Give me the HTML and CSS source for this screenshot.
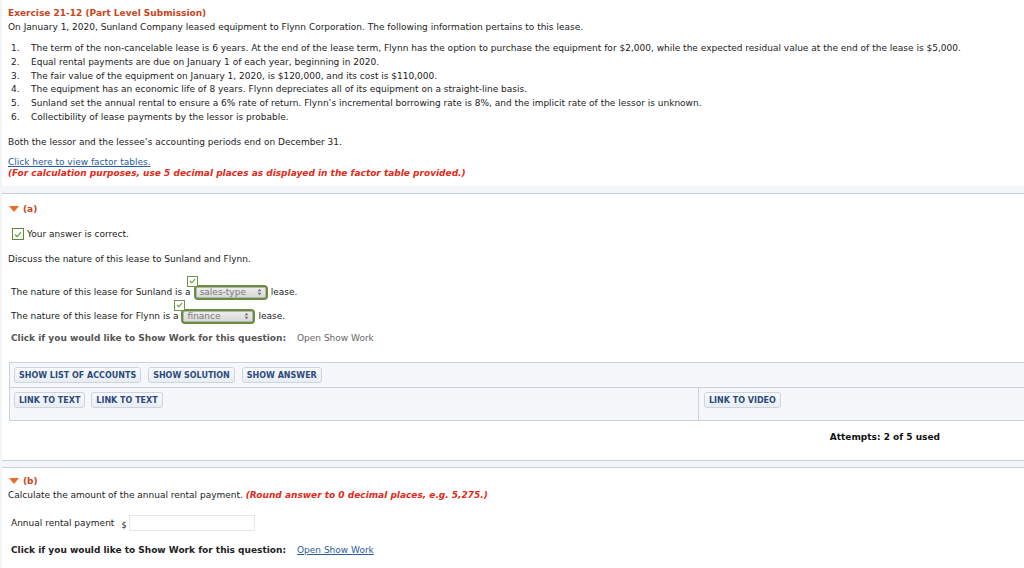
FILE: index.html
```html
<!DOCTYPE html>
<html lang="en">
<head>
    <meta charset="UTF-8">
    <meta name="viewport" content="width=device-width, initial-scale=1.0">
    <title>Exercise 21-12</title>
    <link rel="stylesheet" href="styles.css">
</head>
<body>
<div class="page">
    <div class="intro">
        <div class="title">Exercise 21-12 (Part Level Submission)</div>
        <p class="lead">On January 1, 2020, Sunland Company leased equipment to Flynn Corporation. The following information pertains to this lease.</p>
        <ol class="facts">
            <li><span class="num">1.</span>The term of the non-cancelable lease is 6 years. At the end of the lease term, Flynn has the option to purchase the equipment for $2,000, while the expected residual value at the end of the lease is $5,000.</li>
            <li><span class="num">2.</span>Equal rental payments are due on January 1 of each year, beginning in 2020.</li>
            <li><span class="num">3.</span>The fair value of the equipment on January 1, 2020, is $120,000, and its cost is $110,000.</li>
            <li><span class="num">4.</span>The equipment has an economic life of 8 years. Flynn depreciates all of its equipment on a straight-line basis.</li>
            <li><span class="num">5.</span>Sunland set the annual rental to ensure a 6% rate of return. Flynn’s incremental borrowing rate is 8%, and the implicit rate of the lessor is unknown.</li>
            <li><span class="num">6.</span>Collectibility of lease payments by the lessor is probable.</li>
        </ol>
        <p class="both">Both the lessor and the lessee’s accounting periods end on December 31.</p>
        <div class="factor">
            <a href="#" class="link">Click here to view factor tables.</a><br>
            <em class="note">(For calculation purposes, use 5 decimal places as displayed in the factor table provided.)</em>
        </div>
    </div>
    <div class="band"></div>

    <div class="part">
        <div class="part-head"><span class="tri"></span>(a)</div>
        <div class="correct">
            <span class="okbox"><svg width="8" height="7" viewBox="0 0 8 7"><path d="M1 3.6 L3 5.6 L7 1.2" fill="none" stroke="#5f9a2e" stroke-width="1.2"/></svg></span>
            Your answer is correct.
        </div>
        <p class="discuss">Discuss the nature of this lease to Sunland and Flynn.</p>
        <div class="nature first">
            The nature of this lease for Sunland is a
            <span class="pick">
                <span class="mark"><svg width="7" height="6" viewBox="0 0 7 6"><path d="M1 3 L2.8 4.8 L6 1.2" fill="none" stroke="#5f9a2e" stroke-width="1.1"/></svg></span>
                <span class="sel"><span>sales-type</span><svg class="arr" width="5" height="8" viewBox="0 0 5 8"><path d="M0.5 3.2 L2.5 0.8 L4.5 3.2Z M0.5 4.8 L2.5 7.2 L4.5 4.8Z" fill="#777"/></svg></span>
            </span>
            lease.
        </div>
        <div class="nature">
            The nature of this lease for Flynn is a
            <span class="pick">
                <span class="mark"><svg width="7" height="6" viewBox="0 0 7 6"><path d="M1 3 L2.8 4.8 L6 1.2" fill="none" stroke="#5f9a2e" stroke-width="1.1"/></svg></span>
                <span class="sel"><span>finance</span><svg class="arr" width="5" height="8" viewBox="0 0 5 8"><path d="M0.5 3.2 L2.5 0.8 L4.5 3.2Z M0.5 4.8 L2.5 7.2 L4.5 4.8Z" fill="#777"/></svg></span>
            </span>
            lease.
        </div>
        <div class="showwork gray"><b>Click if you would like to Show Work for this question:</b><span class="openplain">Open Show Work</span></div>

        <div class="tools">
            <div class="tools-row">
                <button class="tbtn">Show List of Accounts</button>
                <button class="tbtn">Show Solution</button>
                <button class="tbtn">Show Answer</button>
            </div>
            <div class="tools-row split">
                <div class="cell">
                    <button class="tbtn">Link to Text</button>
                    <button class="tbtn">Link to Text</button>
                </div>
                <div class="cell video">
                    <button class="tbtn">Link to Video</button>
                </div>
            </div>
        </div>
        <div class="attempts">Attempts: 2 of 5 used</div>
    </div>
    <div class="band double"></div>

    <div class="part partb">
        <div class="part-head"><span class="tri"></span>(b)</div>
        <p class="calc">Calculate the amount of the annual rental payment. <em class="note">(Round answer to 0 decimal places, e.g. 5,275.)</em></p>
        <div class="answer">
            <span class="alabel">Annual rental payment</span>
            <span class="dollar">$</span>
            <input type="text" class="ainput">
        </div>
        <div class="showwork last"><b>Click if you would like to Show Work for this question:</b><a href="#" class="link open">Open Show Work</a></div>
    </div>
</div>
</body>
</html>
```

FILE: styles.css
```css
body {
    margin: 0;
    background: #f3f5f8;
    font-family: "DejaVu Sans", Verdana, sans-serif;
    font-size: 9px;
    color: #222;
}
.page {
    margin-left: 2px;
    height: 568px;
    overflow: hidden;
}
p {
    margin: 0;
}
.intro {
    background: #fff;
    padding: 6px 6px 0 6px;
    height: 180px;
}
.title {
    color: #c6461c;
    font-weight: bold;
    line-height: 14px;
}
.lead {
    line-height: 14px;
}
.facts {
    list-style: none;
    margin: 8px 0 0 0;
    padding: 0 0 0 3px;
}
.facts li {
    line-height: 13.8px;
}
.num {
    display: inline-block;
    width: 20px;
}
.both {
    margin-top: 10px;
    line-height: 14px;
}
.factor {
    margin-top: 8px;
    line-height: 11px;
}
.link {
    color: #2b5c9b;
    text-decoration: underline;
}
.note {
    color: #e02a1a;
    font-weight: bold;
}
.band {
    height: 7px;
    background: #f3f5f8;
    border-bottom: 1px solid #c5ced9;
}
.band.double {
    border-top: 1px solid #c5ced9;
    height: 6px;
}
.part {
    background: #fff;
    padding: 8px 6px 0 6px;
}
.part-head {
    display: flex;
    align-items: center;
    gap: 4px;
    color: #c6461c;
    font-weight: bold;
    line-height: 14px;
    padding-left: 1px;
}
.tri {
    width: 0;
    height: 0;
    border-left: 5.5px solid transparent;
    border-right: 5.5px solid transparent;
    border-top: 6px solid #eb6a2a;
}
.correct {
    display: flex;
    align-items: center;
    gap: 3px;
    margin-top: 11px;
    padding-left: 4px;
    line-height: 14px;
}
.okbox {
    width: 10px;
    height: 10px;
    border: 1px solid #5f8a32;
    display: flex;
    align-items: center;
    justify-content: center;
}
.discuss {
    margin-top: 11px;
    line-height: 14px;
}
.nature {
    display: flex;
    align-items: center;
    gap: 3px;
    padding-left: 3px;
    margin-top: 8px;
    height: 16px;
}
.nature.first {
    margin-top: 18px;
}
.pick {
    position: relative;
    display: inline-flex;
}
.mark {
    position: absolute;
    left: -7px;
    top: -9px;
    width: 9px;
    height: 9px;
    border: 1px solid #6e9446;
    background: #fff;
    display: flex;
    align-items: center;
    justify-content: center;
}
.sel {
    display: inline-flex;
    align-items: center;
    justify-content: space-between;
    width: 62px;
    height: 11px;
    padding: 0 4px;
    border: 2px solid #6a8c3c;
    border-radius: 4px;
    box-shadow: inset 0 0 0 1px #b5b5b5;
    background: linear-gradient(#efefef, #d6d6d6);
    color: #7a7a7a;
}
.showwork {
    margin-top: 7px;
    line-height: 14px;
    padding-left: 3px;
}
.showwork.last {
    margin-top: 9px;
}
.showwork b {
    margin-right: 11px;
}
.showwork.gray b {
    color: #555;
}
.openplain {
    color: #666;
}
.tools {
    margin: 17px -6px 0 1px;
    background: #f5f7fa;
    border: 1px solid #c9d1dc;
    border-right: none;
}
.tools-row {
    display: flex;
    gap: 7px;
    padding: 4px;
}
.tools-row + .tools-row {
    border-top: 1px solid #c9d1dc;
}
.tools-row.split {
    display: grid;
    grid-template-columns: 681px 1fr;
    padding: 0;
    height: 32px;
}
.cell {
    display: flex;
    gap: 6px;
    padding: 4px;
    align-items: flex-start;
}
.cell.video {
    border-left: 1px solid #c9d1dc;
    padding-left: 5px;
}
.tbtn {
    font-family: "DejaVu Sans", Verdana, sans-serif;
    font-size: 8px;
    font-weight: bold;
    text-transform: uppercase;
    color: #2c4a7c;
    height: 16px;
    padding: 0 4px;
    background: linear-gradient(#f8fafc, #e8edf3);
    border: 1px solid #ccd5df;
    border-radius: 3px;
}
.attempts {
    text-align: right;
    padding-right: 78px;
    font-weight: bold;
    color: #111;
    margin-top: 9px;
    line-height: 14px;
    padding-bottom: 16px;
}
.partb {
    padding-top: 6px;
    height: 120px;
}
.calc {
    line-height: 14px;
}
.answer {
    display: flex;
    align-items: flex-start;
    margin-top: 14px;
    padding-left: 3px;
    height: 18px;
}
.alabel {
    line-height: 14px;
}
.dollar {
    margin: 5px 3px 0 7px;
    font-size: 8px;
}
.ainput {
    width: 120px;
    height: 14px;
    border: 1px solid #e3e6ea;
    padding: 0 2px;
    margin: -1px 0 0 0;
}
.open {
    color: #2b5c9b;
}
```
